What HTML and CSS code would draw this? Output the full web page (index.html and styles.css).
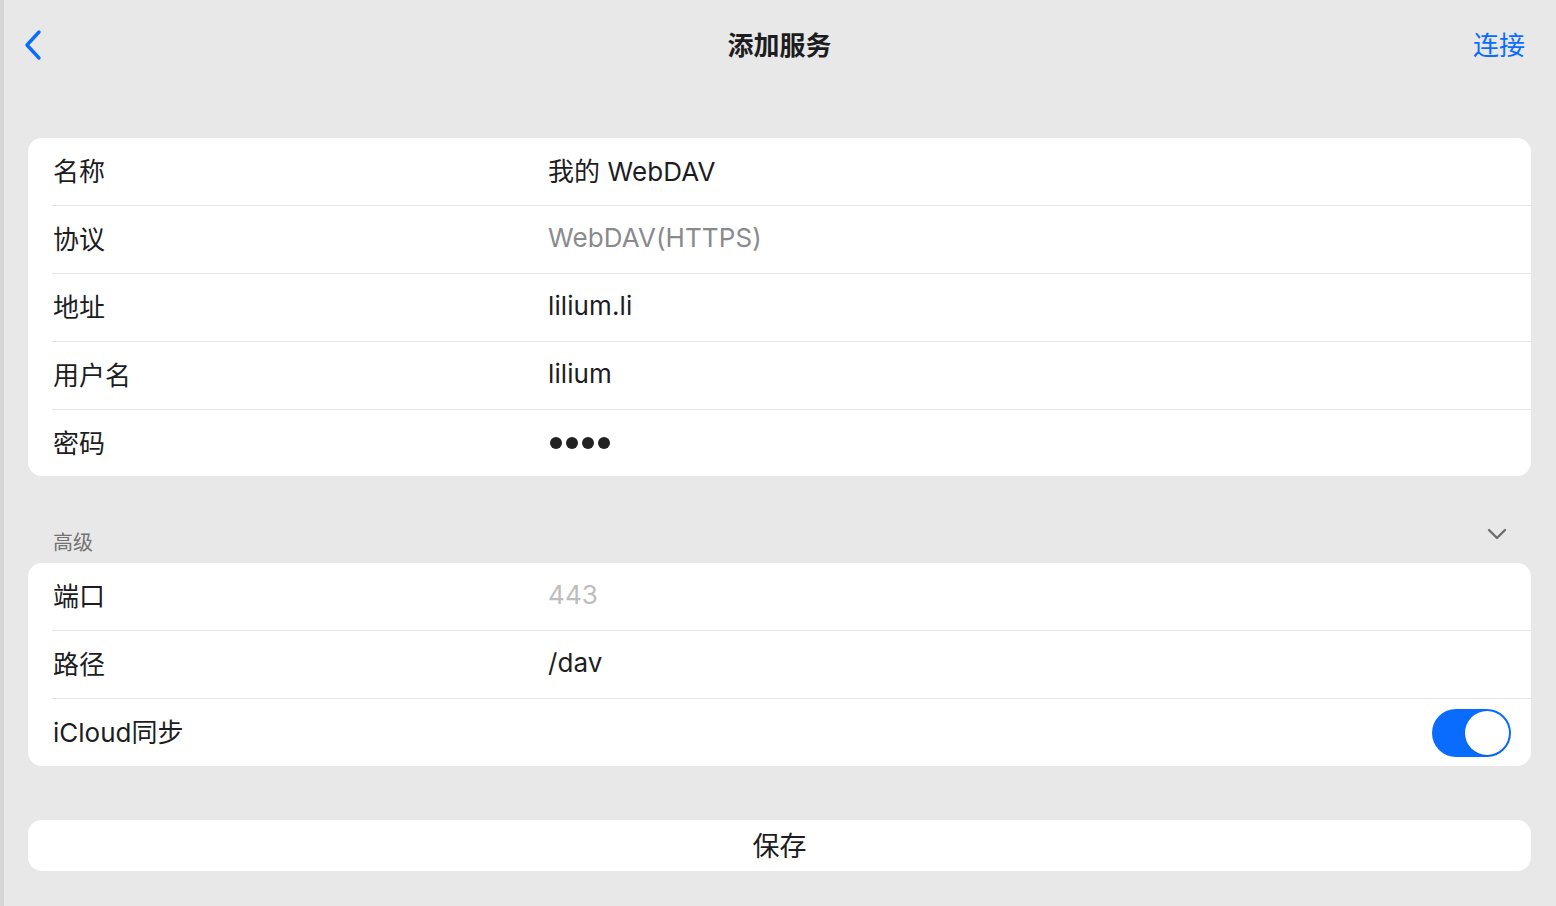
FILE: index.html
```html
<!DOCTYPE html>
<html lang="zh">
<head>
<meta charset="utf-8">
<link rel="stylesheet" href="styles.css">
</head>
<body>
<div class="page">
  <header class="nav">
    <button class="back" aria-label="返回">
      <svg width="20" height="32" viewBox="0 0 20 32"><path d="M16 3 L4 16 L16 29" fill="none" stroke="#0a6cff" stroke-width="3.4" stroke-linecap="round" stroke-linejoin="round"/></svg>
    </button>
    <div class="title">添加服务</div>
    <button class="connect">连接</button>
  </header>

  <section class="card">
    <div class="row"><span class="label">名称</span><span class="value">我的 WebDAV</span></div>
    <div class="row"><span class="label">协议</span><span class="value muted">WebDAV(HTTPS)</span></div>
    <div class="row"><span class="label">地址</span><span class="value">lilium.li</span></div>
    <div class="row"><span class="label">用户名</span><span class="value">lilium</span></div>
    <div class="row short"><span class="label">密码</span><span class="value dots"><i></i><i></i><i></i><i></i></span></div>
  </section>

  <div class="section-head">
    <span>高级</span>
    <svg class="chev" width="20" height="12" viewBox="0 0 20 12"><path d="M2 2 L10 10 L18 2" fill="none" stroke="#6d6d6d" stroke-width="2.4" stroke-linecap="round" stroke-linejoin="round"/></svg>
  </div>

  <section class="card">
    <div class="row"><span class="label">端口</span><span class="value placeholder">443</span></div>
    <div class="row"><span class="label">路径</span><span class="value">/dav</span></div>
    <div class="row"><span class="label">iCloud同步</span><span class="toggle"><span class="knob"></span></span></div>
  </section>

  <button class="save">保存</button>
</div>
</body>
</html>
```
FILE: styles.css
```css
* { box-sizing: border-box; }
html, body { margin: 0; padding: 0; }
body {
  background: #e8e8e8;
  font-family: "Inter", "Noto Sans CJK SC", sans-serif;
  color: #1d1d1f;
}
.page {
  width: 1556px;
  height: 906px;
  border-left: 4px solid #d6d6d6;
  padding: 0 25px 0 24px;
  overflow: hidden;
}
.nav {
  height: 90px;
  padding-bottom: 4px;
  display: flex;
  align-items: center;
  justify-content: space-between;
  position: relative;
}
.nav button {
  background: none;
  border: 0;
  padding: 0;
  font-family: inherit;
  cursor: pointer;
}
.back { width: 24px; height: 32px; display: flex; align-items: center; margin-left: -5px; margin-top: 4px; }
.title {
  position: absolute;
  left: 0; right: 0;
  top: 25px;
  text-align: center;
  font-size: 26px;
  font-weight: 700;
  color: #1d1d1f;
  pointer-events: none;
}
.connect {
  font-size: 26px;
  color: #0a6cff;
  margin-right: 6px;
}
.card {
  margin-top: 48px;
  background: #fff;
  border-radius: 14px;
  padding-left: 24px;
  overflow: hidden;
}
.row {
  height: 68px;
  display: flex;
  align-items: center;
  border-top: 1px solid #e4e4e4;
  font-size: 26px;
  padding-bottom: 4px;
}
.row:first-child { border-top: 0; height: 67px; }
.row.short { height: 67px; }
.label { width: 496px; padding-left: 1px; }
.value { color: #1d1d1f; letter-spacing: 0.1px; }
.muted { color: #8a8a8e; }
.placeholder { color: #bdbdbd; }
.dots { display: flex; gap: 4px; padding-left: 2px; padding-top: 4px; }
.dots i { width: 12px; height: 12px; border-radius: 50%; background: #222; display: block; }
.toggle {
  margin-left: auto;
  margin-right: 20px;
  margin-top: 4px;
  width: 79px;
  height: 48px;
  border-radius: 24px;
  background: #0a6cff;
  position: relative;
}
.knob {
  position: absolute;
  right: 2px; top: 2px;
  width: 44px; height: 44px;
  border-radius: 50%;
  background: #fff;
  box-shadow: 0 1px 2px rgba(0,0,0,0.15);
}
.section-head {
  height: 87px;
  display: flex;
  align-items: flex-end;
  justify-content: space-between;
  padding: 0 25px 7px 25px;
  font-size: 20px;
  color: #737373;
  position: relative;
}
.section-head + .card { margin-top: 0; }
.chev { position: absolute; right: 24px; top: 52px; }
.save {
  display: block;
  width: 100%;
  margin-top: 54px;
  height: 51px;
  border: 0;
  border-radius: 14px;
  background: #fff;
  font-family: inherit;
  font-size: 27px;
  color: #1d1d1f;
  cursor: pointer;
  padding-bottom: 3px;
}
```
